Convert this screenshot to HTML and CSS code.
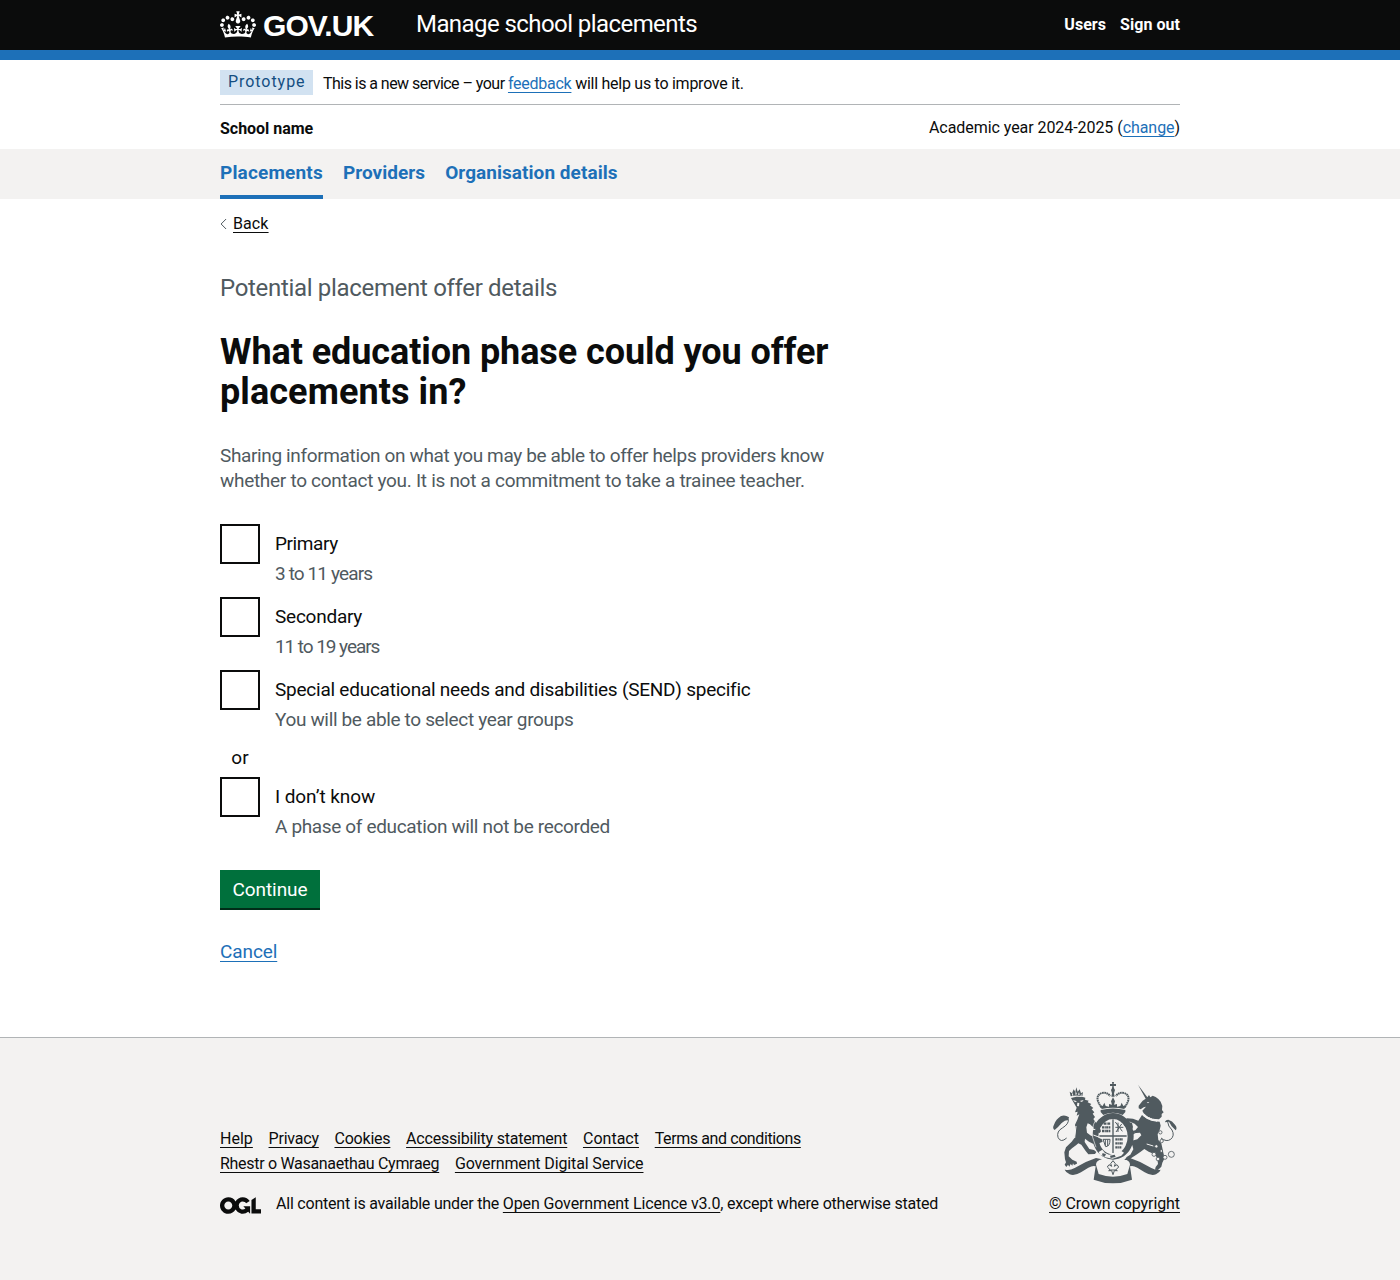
FILE: index.html
```
<!DOCTYPE html>
<html lang="en">
<head>
<meta charset="utf-8">
<title>What education phase could you offer placements in? - Manage school placements - GOV.UK</title>
<link rel="stylesheet" href="styles.css">
</head>
<body>
<header class="header">
  <div class="container header-row">
    <a class="logo" href="#">
      <svg class="crown" viewBox="0 0 132 97" width="36" height="27" aria-hidden="true"><path fill="currentColor" d="M25 30.2c3.5 1.5 7.7-.2 9.1-3.7 1.5-3.6-.2-7.8-3.9-9.2-3.6-1.4-7.6.3-9.1 3.9-1.4 3.5.3 7.5 3.9 9zM9 39.5c3.6 1.5 7.8-.2 9.2-3.7 1.5-3.6-.2-7.8-3.9-9.1-3.6-1.5-7.6.2-9.1 3.8-1.4 3.5.3 7.5 3.8 9zM4.4 57.2c3.5 1.5 7.7-.2 9.1-3.8 1.5-3.6-.2-7.7-3.9-9.1-3.5-1.5-7.6.3-9.1 3.8-1.4 3.5.3 7.6 3.9 9.1zm38.3-21.4c3.5 1.5 7.7-.2 9.1-3.8 1.5-3.6-.2-7.7-3.9-9.1-3.6-1.5-7.6.3-9.1 3.8-1.3 3.6.4 7.7 3.9 9.1zm64.4-5.6c-3.6 1.5-7.8-.2-9.1-3.7-1.5-3.6.2-7.8 3.8-9.2 3.6-1.4 7.7.3 9.2 3.9 1.3 3.5-.4 7.5-3.9 9zm15.9 9.3c-3.6 1.5-7.7-.2-9.1-3.7-1.5-3.6.2-7.8 3.7-9.1 3.6-1.5 7.7.2 9.2 3.8 1.5 3.5-.3 7.5-3.8 9zm4.7 17.7c-3.6 1.5-7.8-.2-9.2-3.8-1.5-3.6.2-7.7 3.9-9.1 3.6-1.5 7.7.3 9.2 3.8 1.3 3.5-.4 7.6-3.9 9.1zM89.3 35.8c-3.6 1.5-7.8-.2-9.2-3.8-1.4-3.6.2-7.7 3.9-9.1 3.6-1.5 7.7.3 9.2 3.8 1.4 3.6-.3 7.7-3.9 9.1zM69.7 17.7l8.9 4.7V9.3l-8.9 2.8c-.2-.3-.5-.6-.9-.9L72.4 0H59.6l3.5 11.2c-.3.3-.6.5-.9.9l-8.8-2.8v13.1l8.8-4.7c.3.3.6.7.9.9l-5 15.4v.1c-.2.8-.4 1.6-.4 2.4 0 4.1 3.1 7.5 7 8.1h.2c.3 0 .7.1 1 .1.4 0 .7 0 1-.1h.2c4-.6 7.1-4.1 7.1-8.1 0-.8-.1-1.7-.4-2.4V34l-5.1-15.4c.4-.2.7-.6 1-.9zM66 92.8c16.9 0 32.8 1.1 47.1 3.2 4-16.9 8.9-26.7 14-33.5l-9.6-3.4c1 4.9 1.1 7.2 0 10.2-1.5-1.4-3-4.3-4.2-8.7L108.6 76c2.8-2 5-3.2 7.5-3.3-4.4 9.4-10 11.9-13.6 11.2-4.3-.8-6.3-4.6-5.6-7.9 1-4.7 5.7-5.9 8-.5 4.3-8.7-3-11.4-7.6-8.8 7.1-7.2 7.9-13.5 2.1-21.1-8 6.1-8.1 12.3-4.5 20.8-4.7-5.4-12.1-2.5-9.5 6.2 3.4-5.2 7.9-2 7.2 3.1-.6 4.3-6.4 7.8-13.5 7.2-10.3-.9-10.9-8-11.2-13.8 2.5-.5 7.1 1.8 11 7.3L80.2 60c-4.1 4.4-8 5.3-12.3 5.4 1.4-4.4 8-11.6 8-11.6H55.5s6.4 7.2 7.9 11.6c-4.2-.1-8-1-12.3-5.4l1.4 16.4c3.9-5.5 8.5-7.7 10.9-7.3-.3 5.8-.9 12.8-11.1 13.8-7.2.6-12.9-2.9-13.5-7.2-.7-5 3.8-8.3 7.1-3.1 2.7-8.7-4.6-11.6-9.4-6.2 3.7-8.5 3.6-14.7-4.6-20.8-5.8 7.6-5 13.9 2.2 21.1-4.7-2.6-11.9.1-7.7 8.8 2.3-5.5 7.1-4.2 8.1.5.7 3.3-1.3 7.1-5.7 7.9-3.5.7-9-1.8-13.5-11.2 2.5.1 4.7 1.3 7.5 3.3l-4.7-15.4c-1.2 4.4-2.7 7.2-4.3 8.7-1.1-3-.9-5.3 0-10.2l-9.5 3.4c5 6.9 9.9 16.7 14 33.5 14.8-2.1 30.8-3.2 47.7-3.2z"/></svg>
      <span class="logo-text">GOV.UK</span>
    </a>
    <a class="service" href="#">Manage school placements</a>
    <nav class="account"><a href="#">Users</a><a href="#">Sign out</a></nav>
  </div>
</header>

<div class="container">
  <div class="phase"><strong class="tag">Prototype</strong><span class="phase-text"><span class="phase-lead">This is a new service – your </span><a class="link" href="#">feedback</a> will help us to improve it.</span></div>
  <div class="org"><strong>School name</strong><span class="year">Academic year 2024-2025 (<a class="link" href="#">change</a>)</span></div>
</div>

<nav class="nav">
  <div class="container nav-row">
    <a class="current" href="#">Placements</a><a href="#">Providers</a><a href="#">Organisation details</a>
  </div>
</nav>

<div class="container page">
  <a class="back" href="#"><svg viewBox="0 0 7 12" width="7" height="12" aria-hidden="true"><path d="M6.1 1 1.1 6l5 5" fill="none" stroke="#505a5f"/></svg><span>Back</span></a>
  <main class="main">
    <p class="caption">Potential placement offer details</p>
    <h1>What education phase could you offer<br><span class="h1-end">placements in?</span></h1>
    <p class="hint"><span class="hint-a">Sharing information on what you may be able to offer helps providers know</span><br>whether to contact you. It is not a commitment to take a trainee teacher.</p>

    <div class="choices">
      <label class="choice"><input type="checkbox"><span class="choice-text"><span class="primary">Primary</span><small class="ages">3 to 11 years</small></span></label>
      <label class="choice"><input type="checkbox"><span class="choice-text"><span>Secondary</span><small class="ages ages-older">11 to 19 years</small></span></label>
      <label class="choice"><input type="checkbox"><span class="choice-text"><span>Special educational needs and disabilities (SEND) specific</span><small>You will be able to select year groups</small></span></label>
      <div class="divider">or</div>
      <label class="choice"><input type="checkbox"><span class="choice-text"><span class="unknown">I don’t know</span><small>A phase of education will not be recorded</small></span></label>
    </div>

    <button class="button" type="button">Continue</button>
    <p class="cancel"><a class="link" href="#">Cancel</a></p>
  </main>
</div>

<footer class="footer">
  <div class="container footer-row">
    <div class="footer-main">
      <ul class="footer-links">
        <li><a class="tight-0" href="#">Help</a></li><li><a class="tight-2" href="#">Privacy</a></li><li><a class="tight-2" href="#">Cookies</a></li><li><a class="tight-2" href="#">Accessibility statement</a></li><li><a class="tight-0" href="#">Contact</a></li><li><a class="tight-4" href="#">Terms and conditions</a></li><li><a class="tight-3" href="#">Rhestr o Wasanaethau Cymraeg</a></li><li><a class="tight-1" href="#">Government Digital Service</a></li>
      </ul>
      <div class="licence">
        <svg viewBox="0 0 483.2 195.7" width="41" height="17" aria-hidden="true"><path fill="currentColor" d="M421.5 142.8V.1l-50.7 32.3v161.1h112.4v-50.7zm-122.3-9.6A47.12 47.12 0 0 1 221 97.8c0-26 21.1-47.1 47.1-47.1 16.7 0 31.4 8.7 39.7 21.8l42.7-27.2A97.63 97.63 0 0 0 268.1 0c-36.5 0-68.3 20.1-85.1 49.7A98 98 0 0 0 97.8 0C43.9 0 0 43.9 0 97.8s43.9 97.8 97.8 97.8c36.5 0 68.3-20.1 85.1-49.7a97.76 97.76 0 0 0 149.6 25.4l19.4 22.2h3v-87.8h-80l24.3 27.5zM97.8 145c-26 0-47.1-21.1-47.1-47.1s21.1-47.1 47.1-47.1 47.1 21.1 47.1 47.1S123.8 145 97.8 145"/></svg>
        <span class="tight-2">All content is available under the <a class="tight-1" href="#">Open Government Licence v3.0</a>, except where otherwise stated</span>
      </div>
    </div>
    <a class="crest" href="#">
      <svg viewBox="36 33 375 312" width="125" height="104" aria-hidden="true">
        <g fill="#505a5f">
          <!-- crown over the shield -->
          <path d="M216 36h6l-1 6h7v6h-7l1 7 3 5-3 10 2 10h-10l2-10-3-10 3-5 1-7h-7v-6h7z"/>
          <path d="M219 82l6 12-3 10 9-2v8l10-2 4-10 5 10 8-3-5 12q-34-7-68 0l-5-12 8 3 5-10 4 10 10 2v-8l9 2-3-10z"/>
          <path d="M182 120q37-9 74 0v6l-8 9q-29-14-58 0l-8-9z"/>
          <!-- garter -->
          <path fill-rule="evenodd" d="M219 129a62 70 0 1 0 .1 0zM219 147a44 53 0 1 1-.1 0z"/>
          <!-- lion -->
          <path d="M93 84l16-4 20 1 7 2-1 6 11 3-3 5 11 5-4 4 10 8-5 4 8 9-5 4 7 10-5 6 10 14 9 11 4 12-4 5-9-2-8 2-4-6 7-6-15-14-7-3-4 12 2 16 12 9 18 5 14 5 3 8-11 5-18 1-12-6-12-9-1 10 8 12 6 9 14 3 7 6-4 6-20 1-8-10-13-19-9-4-6 5-13 10-9 8-1 16 11 10 13 6 1 6-9 4-3-5-2 7-5-5-4 8-4-6-5 7-5-7 4-7-3-9-2-21 5-15 17-17 9-12 3-22-2-17 7-15 6-16-8 4 3-12-8 2 5-14z"/>
          <path d="M92 79l-3-14 7 5 5-12 5 7 3-13 4 13 6-7 4 12 6-4-2 13q-18-5-35 0z"/>
          <!-- unicorn -->
          <path d="M294 44l28 38 5-7 4 7 7-5 9 4 8 6 7 8 5 13-1 12 5 7-6 5 0 8-8 8-20-2-14-6-12-10-4-8 11-12-7 2-9 6-6-3 0-8 12-15 9-6z"/>
          <path d="M306 135l14 11 17 7 22 2 3 12-3 13-6 12 2 18 9 10 3 14 3 14 4 16-7 14-3 12-10 10-9-1 2-8 7-9-2-17-8-12-18-8-13-8-12 9-12 8-14 9-7 6-14 1 6-9 11-7 9-16-3-12-12-3 8-10 19-5 12-12-4-8-12 1-16 8-5-9 3-17-10-5-4 4-5-8 9-8 16 5 3 12-4 12 11-2 8-10-10-10-14-6-15 3-4-6 10-7 18 1 16 6z"/>
          <!-- ribbon -->
          <path d="M76 299q12 4 28-5 30-19 64-30l18 4q-18 4-18 16l8 28q43 16 86 0l8-28q0-12-18-16l18-4q34 11 64 30 16 9 28 5-3 9-14 14-14 6-34-6l-22-14q-14-8-22-4l6 40q-57 22-115 0l6-40q-8-4-22 4l-22 14q-20 12-34 6-11-5-15-14z"/>
          <!-- tail tufts -->
          <path d="M44 180q-8-5-2-16 6-16 20-25 12-6 25 3l-2 8q-11 0-20 9-10 12-21 21zM407 181q6-8-2-17-8-12-20-15-9 0-10 8l12-2q6 14 20 26z"/>
        </g>
        <g fill="none" stroke="#505a5f" stroke-width="3">
          <path d="M85 148q2 14-18 26-18 10-13 28 8 18 26 2M382 152q2 18 14 28 9 17-4 28-13 9-29-4"/>
          <path stroke-width="6" stroke-dasharray="5 1.5" d="M184 112q-24-34 2-43 15-3 25 9M254 112q24-34-2-43-15-3-25 9"/>
          <path d="M219 272l7 9-3 8 8-5 5 7-8 8 4 3h-9l-4 12-4-12h-9l4-3-8-8 5-7 8 5-3-8zM209 300h20"/>
          <!-- shield quarters -->
          <path d="M219 148v101M178 198h82" stroke-width="4"/>
          <path d="M191 161h20M186 172h26M186 183h26M226 208h23M226 220h23M226 232h18" stroke-width="7" stroke-dasharray="7 1.5 3 1"/>
          <path d="M226 156l21 28M245 162l-17 24M226 172h24M234 158v28M189 208h21q0 22-13 22l-8-22M196 209v18M203 209v19"/>
        </g>
        <!-- details cut out of the figures -->
        <g fill="#f3f2f1">
          <path d="M99 90l12 4-6 3zM119 93l12-3-5 6zM112 98l6 1-1 10-6-1zM97 67l3 9-4 1zM107 63l4 10-5 1zM117 66l2 9-5-1zM124 71l1 7-4-1z"/>
          <path d="M320 97l8-1-4 4z"/>
          <path d="M176 246l11-7 8 10 12 5 13-3 14-3 9-6 9 6-8 9-26 9-22-4-16-8z"/>
        </g>
        <g fill="none" stroke="#f3f2f1" stroke-width="3">
          <path d="M108 168l-4 36M160 195l24 9M152 180l14-2M284 190l12 10M320 222l20 6"/>
          <path d="M166 152q-12 20-8 50l10 30" stroke-width="2"/>
          <path d="M305 130l12 10 16 8 22 5" stroke-width="6" stroke-dasharray="5 3"/>
        </g>
        <g fill="#505a5f"><path d="M188 249l10 4-4 7-8-4zM210 257l14-3 3 7-15 3z"/></g>
        <g fill="#f3f2f1" stroke="#505a5f" stroke-width="2.5">
          <circle cx="342" cy="253" r="6"/><circle cx="354" cy="267" r="5.5"/><circle cx="375" cy="262" r="6"/><circle cx="394" cy="253" r="9"/><circle cx="365" cy="213" r="5"/><circle cx="349" cy="229" r="5"/><circle cx="364" cy="243" r="4"/><circle cx="361" cy="187" r="5"/>
        </g>
      </svg>
      <span>© Crown copyright</span>
    </a>
  </div>
</footer>
</body>
</html>
```
FILE: styles.css
```
* { box-sizing: border-box; }
body { margin: 0; background: #fff; color: #0b0c0c; font: 16px/20px Roboto, "Liberation Sans", sans-serif; font-kerning: normal; }
a { color: inherit; }
p, h1, ul { margin: 0; padding: 0; }
.container { width: 960px; margin: 0 auto; }
.link { color: #1d70b8; }
.link, .back span, .footer a { text-underline-offset: 3px; text-decoration-thickness: 1px; text-decoration-skip-ink: none; }

.header { height: 60px; background: #0b0c0c; color: #fff; border-bottom: 10px solid #1d70b8; }
.header a { text-decoration: none; }
.header-row { display: flex; height: 50px; align-items: center; }
.logo { display: flex; width: 196px; align-items: center; }
.crown { display: block; margin: 0 7px 2px 0; }
.logo-text { font: bold 30px/34px "Liberation Sans", Arial, sans-serif; letter-spacing: -.9px; padding-top: 2px; }
.service { font-size: 24px; line-height: 30px; letter-spacing: -.57px; padding-bottom: 2px; }
.account { display: flex; gap: 14px; margin-left: auto; font-weight: 700; letter-spacing: .05px; }

.phase { display: flex; height: 45px; padding: 10px 0 9px; align-items: flex-start; border-bottom: 1px solid #b1b4b6; }
.tag { width: 93px; height: 25px; margin-right: 10px; padding-left: 8px; background: #d2e2f1; color: #144e81; font-weight: 400; line-height: 24px; letter-spacing: .95px; }
.phase-text { line-height: 27px; letter-spacing: -.26px; }
.phase-lead { letter-spacing: -.54px; }
.org { display: flex; height: 44px; justify-content: space-between; align-items: center; padding-top: 1px; }
.org strong { padding-top: 3px; letter-spacing: -.03px; }
.year { letter-spacing: -.06px; }

.nav { background: #f3f2f1; }
.nav-row { display: flex; height: 50px; gap: 20px; }
.nav a { height: 50px; color: #1d70b8; font-size: 19px; font-weight: 700; line-height: 47px; text-decoration: none; letter-spacing: .05px; }
.nav .current { border-bottom: 4px solid #1d70b8; letter-spacing: .17px; }

.page { height: 838px; padding-top: 15px; }
.back { display: flex; align-items: center; gap: 6px; text-decoration: none; }
.back span { text-decoration: underline; text-underline-offset: 3px; text-decoration-thickness: 1px; letter-spacing: .1px; }
.main { padding-top: 39px; font-size: 19px; line-height: 25px; }
.caption { margin-bottom: 29px; color: #505a5f; font-size: 24px; line-height: 30px; letter-spacing: -.32px; }
h1 { margin-bottom: 31px; font-size: 36px; line-height: 40px; letter-spacing: -.08px; }
.h1-end { letter-spacing: .08px; }
.hint { margin-bottom: 31px; color: #505a5f; letter-spacing: -.29px; }
.hint-a { letter-spacing: -.365px; }
.choice { display: flex; height: 63px; margin-bottom: 10px; }
.choice input { appearance: none; width: 40px; height: 40px; margin: 0 15px 0 0; border: 2px solid #0b0c0c; background: #fff; }
.choice-text { display: flex; flex-direction: column; gap: 5px; padding-top: 7px; letter-spacing: -.24px; }
.choice .primary { letter-spacing: -.4px; }
.choice .unknown { letter-spacing: -.08px; }
.choice small { color: #505a5f; font-size: 19px; letter-spacing: -.35px; }
.choice .ages { letter-spacing: -.88px; }
.choice .ages-older { letter-spacing: -1.07px; }
.divider { width: 40px; height: 25px; margin: 12px 0 7px; text-align: center; }
.choices .choice:last-child { margin-bottom: 30px; }
.choices { display: flow-root; }
.choice:has(+ .divider) { margin-bottom: 0; }
.button { display: block; width: 100px; height: 40px; padding: 1px 0 0; border: 0; border-bottom: 2px solid #002d18; background: #00703c; color: #fff; font: 19px/25px Roboto, "Liberation Sans", sans-serif; letter-spacing: -.07px; }
.cancel { margin-top: 29px; letter-spacing: -.1px; }

.footer { height: 243px; border-top: 1px solid #b1b4b6; background: #f3f2f1; }
.footer-row { display: flex; justify-content: space-between; padding-top: 43px; }
.footer-main { padding-top: 45px; }
.footer-links { display: flex; flex-wrap: wrap; width: 640px; margin-bottom: 18px; column-gap: 15.7px; list-style: none; line-height: 25px; }
.licence { display: flex; gap: 15px; align-items: center; white-space: nowrap; }
.licence svg { margin-top: 3px; }
.tight-0 { letter-spacing: .02px; }
.tight-1 { letter-spacing: -.13px; }
.tight-2 { letter-spacing: -.21px; }
.tight-3 { letter-spacing: -.3px; }
.tight-4 { letter-spacing: -.4px; }
.crest { display: flex; flex-direction: column; align-items: flex-end; gap: 9px; letter-spacing: -.09px; }
.crest svg { margin-right: 3px; }
```
